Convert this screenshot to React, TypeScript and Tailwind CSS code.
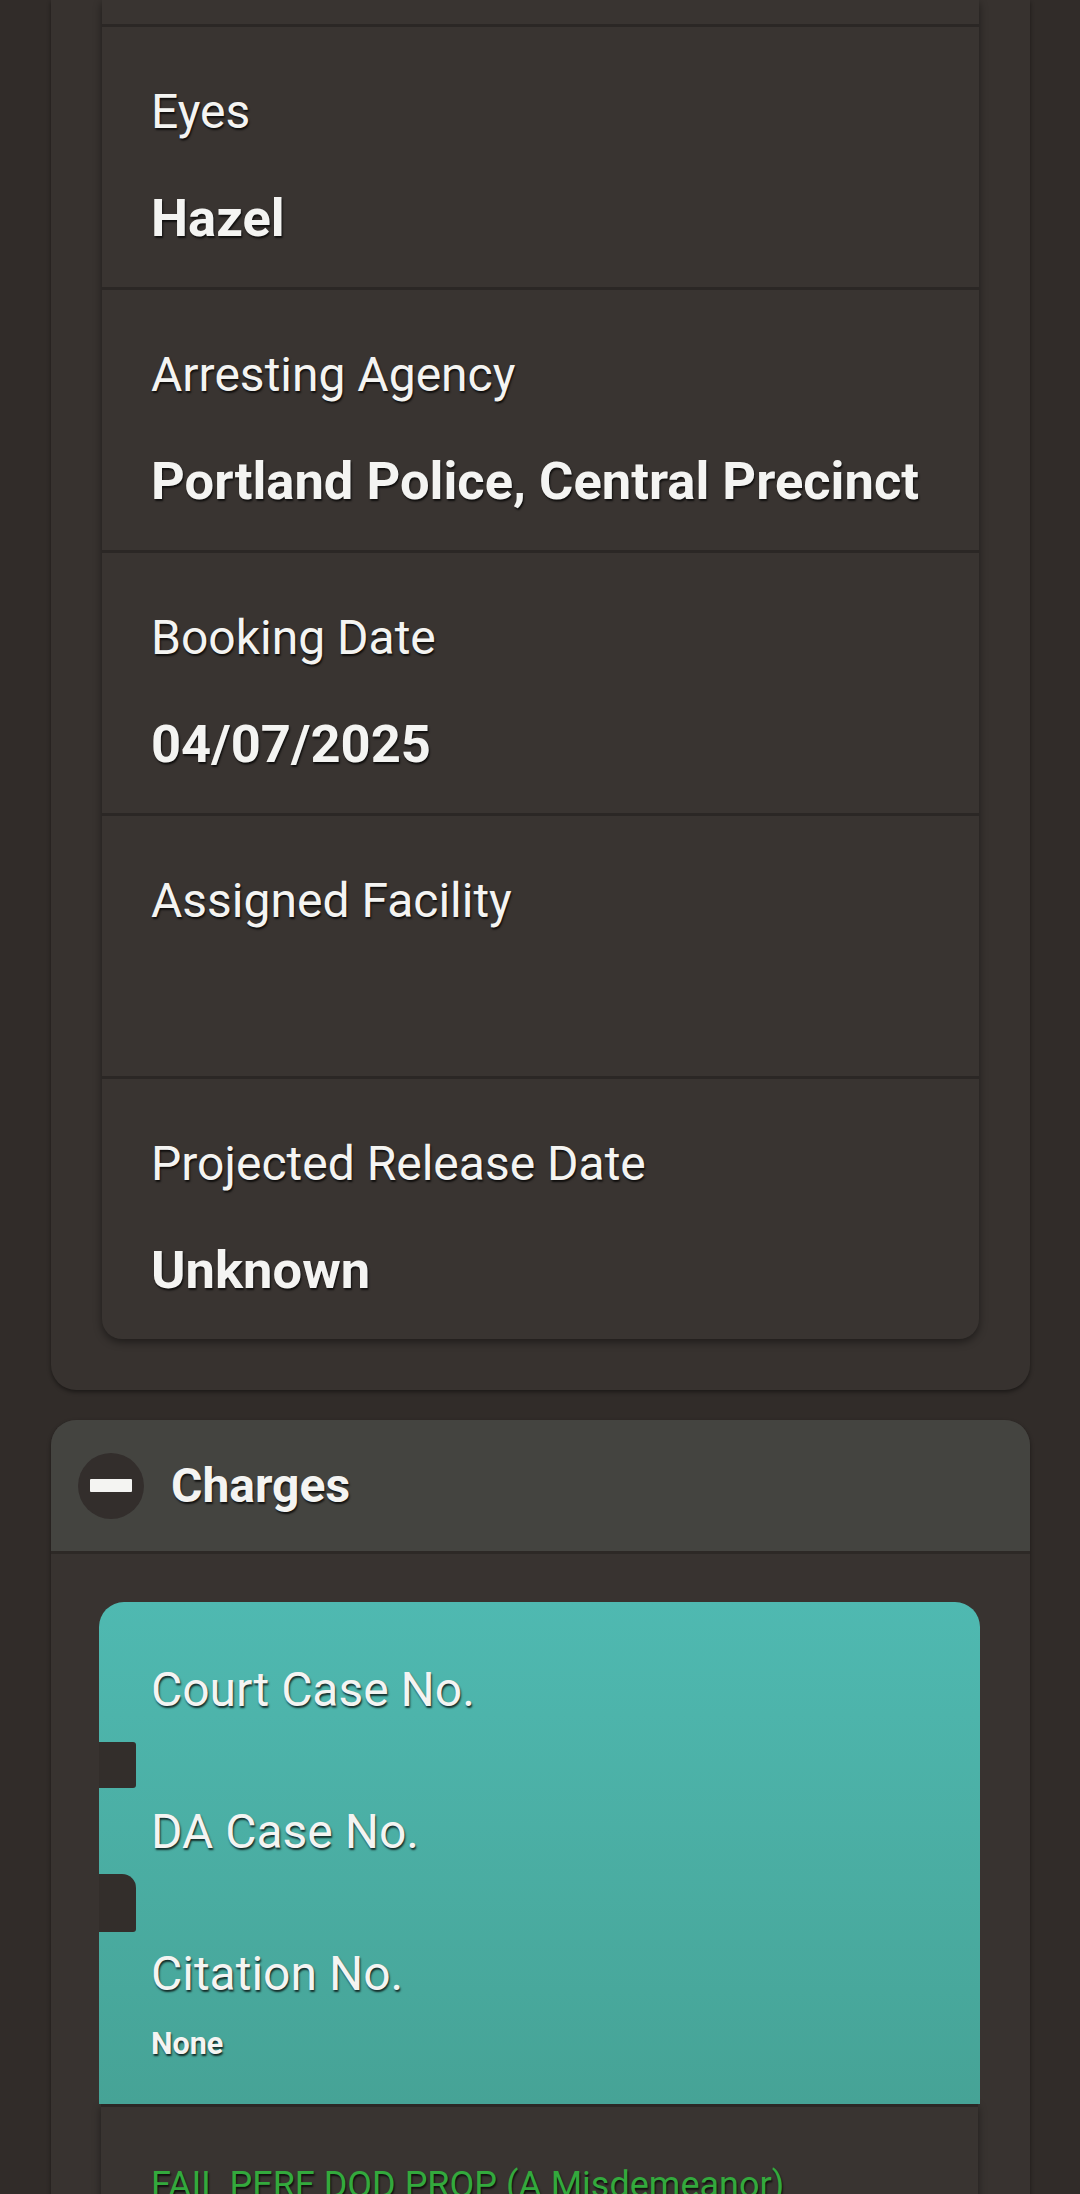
import React from 'react';

const shadow = '[text-shadow:1px_2px_2px_rgba(0,0,0,0.75)]';

interface DetailRow {
    label: string;
    value: string;
}

const details: DetailRow[] = [
    { label: 'Eyes', value: 'Hazel' },
    { label: 'Arresting Agency', value: 'Portland Police, Central Precinct' },
    { label: 'Booking Date', value: '04/07/2025' },
    { label: 'Assigned Facility', value: '' },
    { label: 'Projected Release Date', value: 'Unknown' },
];

const caseNumbers: DetailRow[] = [
    { label: 'Court Case No.', value: '' },
    { label: 'DA Case No.', value: '' },
    { label: 'Citation No.', value: 'None' },
];

export default function App() {
    return (
        <div className="h-[2194px] overflow-hidden bg-[#312c29] font-[Roboto,sans-serif] text-[#f4f4f2]">
            {/* Booking details card (scrolled, top cut off) */}
            <div className="mx-[51px] w-[979px] rounded-b-[25px] bg-[#37322f] px-[51px] pb-[51px] shadow-[0_2px_4px_rgba(0,0,0,0.45)]">
                <div className="overflow-hidden rounded-b-[20px] bg-[#393431] shadow-[0_3px_8px_rgba(0,0,0,0.45)]">
                    <div className="h-[24px]" />
                    {details.map((row) => (
                        <div key={row.label} className="border-t-[3px] border-[#2b2725] px-[49px] pt-[58px] pb-[38px]">
                            <p className={`text-[48px] leading-[54px] ${shadow}`}>{row.label}</p>
                            <p className={`mt-[48px] text-[52.5px] font-bold leading-[62px] ${shadow}`}>
                                {row.value || '\u00a0'}
                            </p>
                        </div>
                    ))}
                </div>
            </div>

            {/* Charges */}
            <div className="mx-[51px] mt-[30px] w-[979px] overflow-hidden rounded-t-[25px] bg-[#383330] shadow-[0_2px_4px_rgba(0,0,0,0.45)]">
                <div className="flex h-[134px] items-center gap-[27px] border-b-[3px] border-[#2d2926] bg-[#444440] px-[27px]">
                    <div className="flex h-[66px] w-[66px] items-center justify-center rounded-full bg-[#332e2c]">
                        <div className="h-[13px] w-[42px] rounded-[1px] bg-[#f4f4f2]" />
                    </div>
                    <h2 className={`text-[48px] font-bold leading-none ${shadow}`}>Charges</h2>
                </div>

                <div className="pt-[48px] pl-[48px] pr-[50px]">
                    <div className="relative rounded-t-[25px] bg-gradient-to-b from-[#4fb9b1] to-[#46a396] px-[52px] pt-[61px] pb-[42px]">
                        {/* redaction smudges */}
                        <div className="absolute left-0 top-[140px] h-[46px] w-[37px] rounded-r-[3px] bg-[#332e2b]" />
                        <div className="absolute left-0 top-[272px] h-[58px] w-[37px] rounded-tr-[14px] rounded-br-[3px] bg-[#332e2b]" />
                        {caseNumbers.map((item, i) => (
                            <div key={item.label} className={i > 0 ? 'mt-[27px]' : ''}>
                                <p className={`text-[48px] leading-[54px] ${shadow}`}>{item.label}</p>
                                <p className={`mt-[25px] text-[30.5px] font-bold leading-[36px] ${shadow}`}>
                                    {item.value || '\u00a0'}
                                </p>
                            </div>
                        ))}
                    </div>
                    <div className="mx-[2px] border-t-[3px] border-[#2b2725] bg-[#393431] px-[50px] pt-[57px] pb-[40px] shadow-[0_3px_8px_rgba(0,0,0,0.45)]">
                        <p className={`whitespace-nowrap text-[36px] leading-[42px] text-[#33a93d] ${shadow}`}>
                            FAIL PERF DOD PROP (A Misdemeanor)
                        </p>
                    </div>
                </div>
            </div>
        </div>
    );
}
